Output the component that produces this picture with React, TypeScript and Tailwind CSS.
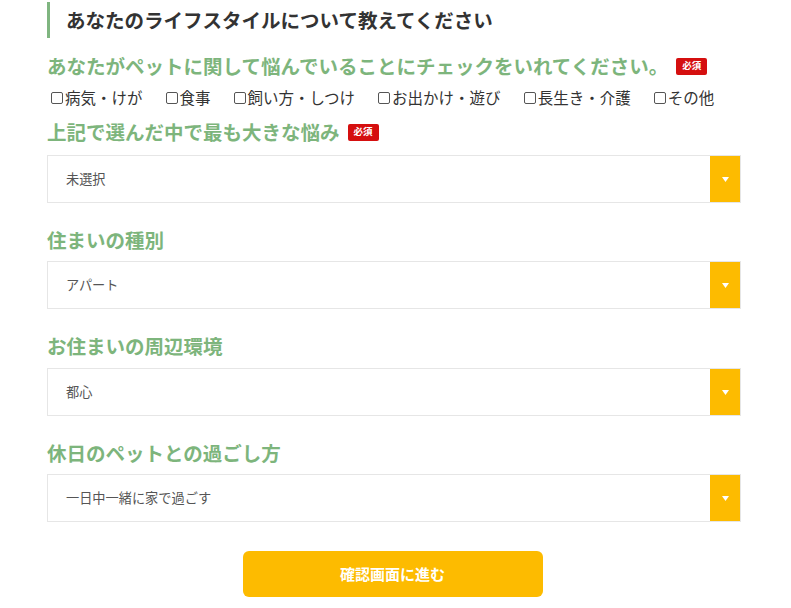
const font = { fontFamily: '"Noto Sans CJK JP", "Noto Sans", sans-serif' }

const concerns = ["病気・けが", "食事", "飼い方・しつけ", "お出かけ・遊び", "長生き・介護", "その他"]

function Badge() {
  return (
    <span className="ml-[8px] inline-flex h-[17px] w-[31px] items-center justify-center rounded-[2px] bg-[#d50f0f] text-[9.5px] font-bold leading-none text-white">
      必須
    </span>
  )
}

function Label({ text, required, className = "" }: { text: string; required?: boolean; className?: string }) {
  return (
    <div className={`flex h-[24px] items-center text-[19.5px] font-bold text-[#7db57c] ${className}`}>
      <span>{text}</span>
      {required && <Badge />}
    </div>
  )
}

function Select({ value, className = "" }: { value: string; className?: string }) {
  return (
    <div className={`flex h-[48px] items-stretch border border-[#e6e6e6] bg-white ${className}`}>
      <div className="flex flex-1 items-center pl-[18px] text-[13.2px] text-[#555]">{value}</div>
      <div className="flex w-[30px] items-center justify-center bg-[#fdbb00]">
        <svg width="7" height="5" viewBox="0 0 7 5">
          <path d="M0 0 L7 0 L3.5 5 Z" fill="#fff" />
        </svg>
      </div>
    </div>
  )
}

export default function App() {
  return (
    <div className="min-h-screen bg-white" style={font}>
      <div className="mx-[47px] w-[694px] pt-[2px]">
        <div className="flex h-[36px] items-center border-l-[3px] border-[#7fb580] pl-[16px] text-[19.5px] font-bold text-[#333]">
          あなたのライフスタイルについて教えてください
        </div>

        <Label text="あなたがペットに関して悩んでいることにチェックをいれてください。" required className="mt-[16px]" />

        <div className="mt-[10px] flex h-[20px] items-center gap-[23px] pl-[4px] text-[15.5px] text-[#333]">
          {concerns.map((c) => (
            <label key={c} className="flex items-center">
              <input type="checkbox" className="mr-[2px] h-[12px] w-[12px] appearance-none rounded-[2px] border border-[#555] bg-white" />
              <span>{c}</span>
            </label>
          ))}
        </div>

        <Label text="上記で選んだ中で最も大きな悩み" required className="mt-[12px]" />
        <Select value="未選択" className="mt-[11px]" />

        <Label text="住まいの種別" className="mt-[25px]" />
        <Select value="アパート" className="mt-[9px]" />

        <Label text="お住まいの周辺環境" className="mt-[25px]" />
        <Select value="都心" className="mt-[10px]" />

        <Label text="休日のペットとの過ごし方" className="mt-[25px]" />
        <Select value="一日中一緒に家で過ごす" className="mt-[9px]" />

        <div className="mt-[29px] flex justify-center">
          <button className="ml-[-3px] h-[46px] w-[300px] rounded-[6px] bg-[#fdbb00] text-[15px] font-bold text-white">
            確認画面に進む
          </button>
        </div>
      </div>
    </div>
  )
}
